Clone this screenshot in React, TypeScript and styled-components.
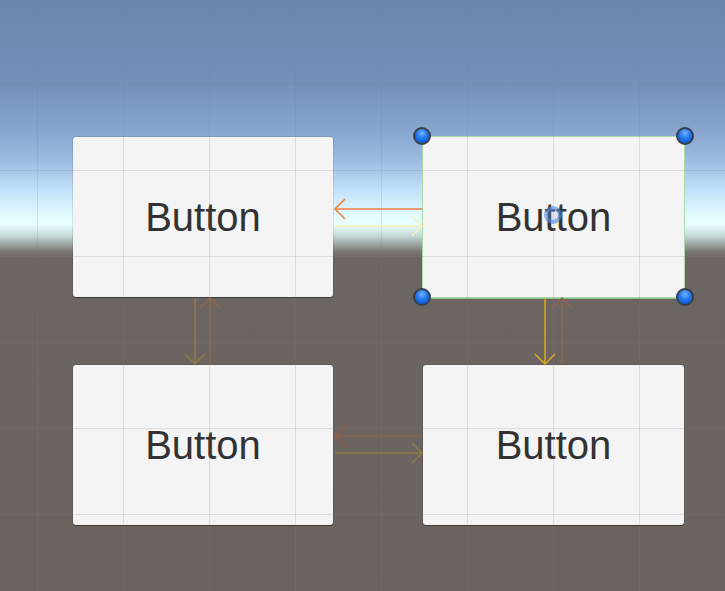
import styled, {createGlobalStyle, css} from "styled-components";

const GlobalStyle = createGlobalStyle`
  html, body, #root {
    margin: 0;
    padding: 0;
    width: 100%;
    height: 100%;
  }
  body {
    overflow: hidden;
    font-family: "Liberation Sans", Arial, sans-serif;
  }
`;

type Arrow = {
  x1: number
  y1: number
  x2: number
  y2: number
  color: string
}

// navigation links between the buttons, tip is at (x2, y2)
const arrows: Arrow[] = [
  {x1: 422, y1: 209, x2: 335, y2: 209, color: "#f07a3a"},
  {x1: 335, y1: 226, x2: 422, y2: 226, color: "#f3f0c4"},
  {x1: 195, y1: 298, x2: 195, y2: 364, color: "#8c7c4a"},
  {x1: 210, y1: 364, x2: 210, y2: 298, color: "#8c6650"},
  {x1: 545, y1: 298, x2: 545, y2: 364, color: "#d8aa1e"},
  {x1: 562, y1: 364, x2: 562, y2: 298, color: "#8c6650"},
  {x1: 422, y1: 436, x2: 335, y2: 436, color: "#8c6048"},
  {x1: 335, y1: 453, x2: 422, y2: 453, color: "#8c7c42"},
]

const headPoints = ({x1, y1, x2, y2}: Arrow) => {
  const len = Math.hypot(x2 - x1, y2 - y1)
  const ux = (x2 - x1) / len
  const uy = (y2 - y1) / len
  const back = 10
  const side = 10
  const bx = x2 - ux * back
  const by = y2 - uy * back
  return `${bx - uy * side},${by + ux * side} ${x2},${y2} ${bx + uy * side},${by - ux * side}`
}

const corners = ["tl", "tr", "bl", "br"] as const

export default function App() {
  return (
    <>
      <GlobalStyle/>
      <Scene>
        <ButtonGrid>
          <UIButton>Button</UIButton>
          <UIButton $selected>Button</UIButton>
          <UIButton>Button</UIButton>
          <UIButton>Button</UIButton>
        </ButtonGrid>
        <GridOverlay/>
        <Gizmos width="725" height="591" viewBox="0 0 725 591">
          {arrows.map((a, i) => (
            <g key={i} stroke={a.color} strokeWidth="1.5" fill="none">
              <line x1={a.x1} y1={a.y1} x2={a.x2} y2={a.y2}/>
              <polyline points={headPoints(a)}/>
            </g>
          ))}
          <circle cx="553" cy="215" r="7" fill="rgba(140,175,235,0.25)" stroke="rgba(80,138,225,0.6)" strokeWidth="4"/>
        </Gizmos>
        <HandleLayer>
          {corners.map(c => <Handle key={c} $corner={c}/>)}
        </HandleLayer>
      </Scene>
    </>
  );
}

const Scene = styled.div`
  position: relative;
  width: 725px;
  height: 591px;
  overflow: hidden;
  background: linear-gradient(
    to bottom,
    #6b85ac 0px,
    #7590b9 84px,
    #87a5cd 130px,
    #9bbbe1 160px,
    #c6e4fa 193px,
    #e2fbff 216px,
    #e8ffff 224px,
    #c9dcdc 235px,
    #a2acab 243px,
    #7a7571 252px,
    #6c6561 258px,
    #6a635f 591px
  );
`;

const ButtonGrid = styled.div`
  display: grid;
  grid-template-columns: 260px 261px;
  grid-auto-rows: 160px;
  column-gap: 90px;
  row-gap: 68px;
  padding: 137px 0 0 73px;
`;

const UIButton = styled.div<{ $selected?: boolean }>`
  display: flex;
  align-items: center;
  justify-content: center;
  background: #f4f4f4;
  border-radius: 3px;
  box-shadow: 0 0 0 1px rgba(0, 0, 0, 0.1), 0 1px 0 rgba(0, 0, 0, 0.35);
  color: #323232;
  font-family: "Liberation Sans", Arial, sans-serif;
  font-size: 40px;
  padding-top: 1px;

  ${p => p.$selected && css`
    border-radius: 0;
    box-shadow: 0 0 0 1px #a9dca9, 0 1px 0 1px #8fb88f;
  `}
`;

const GridOverlay = styled.div`
  position: absolute;
  inset: 0;
  pointer-events: none;
  background-image: linear-gradient(to right, rgba(125, 125, 130, 0.2) 1px, transparent 1px),
  linear-gradient(to bottom, rgba(125, 125, 130, 0.2) 1px, transparent 1px);
  background-size: 86px 86px;
  background-position: 37px 84px;
`;

const Gizmos = styled.svg`
  position: absolute;
  left: 0;
  top: 0;
  pointer-events: none;
`;

const HandleLayer = styled.div`
  position: absolute;
  left: 422px;
  top: 136px;
  width: 263px;
  height: 161px;
  pointer-events: none;
`;

const Handle = styled.span<{ $corner: "tl" | "tr" | "bl" | "br" }>`
  position: absolute;
  width: 14px;
  height: 14px;
  margin: -9px 0 0 -9px;
  border-radius: 50%;
  border: 2px solid #3a3f4a;
  background: radial-gradient(circle at 50% 30%, #6fb2ff 0%, #2a7df0 40%, #1264e0 70%, #0d4fc0 100%);
  left: ${p => (p.$corner === "tl" || p.$corner === "bl" ? "0" : "100%")};
  top: ${p => (p.$corner === "tl" || p.$corner === "tr" ? "0" : "100%")};
`;
